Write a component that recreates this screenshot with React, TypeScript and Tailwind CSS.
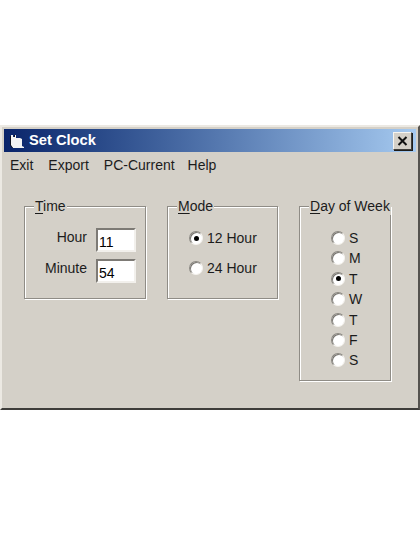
import React from "react";

const font = { fontFamily: '"Liberation Sans", Arial, sans-serif' };

function Radio({ label, checked }: { label: string; checked?: boolean }) {
  return (
    <div className="flex items-center gap-[4px]">
      <div className="flex h-[14px] w-[14px] items-center justify-center rounded-full border border-[#8a8781] border-b-[#f4f2ee] border-r-[#f4f2ee] bg-white shadow-[inset_1px_1px_0_#77746e]">
        {checked && <div className="h-[5px] w-[5px] rounded-full bg-black" />}
      </div>
      <span>{label}</span>
    </div>
  );
}

function Group({ title, rest, className, children }: { title: string; rest: string; className: string; children: React.ReactNode }) {
  return (
    <div className={`relative border border-[#8f8c86] shadow-[inset_1px_1px_0_#fff,1px_1px_0_#fff] ${className}`}>
      <div className="absolute left-[9px] top-[-9px] whitespace-nowrap bg-[#d4d0c8] px-px text-[14px] leading-[17px] text-[#1c1c1c]">
        <span className="underline underline-offset-2">{title}</span>
        {rest}
      </div>
      {children}
    </div>
  );
}

function Field({ label, value, shift }: { label: string; value: string; shift: string }) {
  return (
    <div className="flex items-center justify-end gap-[9px]">
      <span className={shift}>{label}</span>
      <div className="h-[24px] w-[40px] border-2 border-[#7d7a75] border-b-[#f2f0ec] border-r-[#f2f0ec] bg-white pl-[1px] text-[14px] leading-[24px] text-black">
        {value}
      </div>
    </div>
  );
}

export default function App() {
  return (
    <div className="h-[534px] w-[420px] overflow-hidden bg-white pt-[125px]" style={font}>
      <div className="h-[285px] w-[420px] border-2 border-[#ece9e3] border-b-[#3e3d3a] border-r-[#55534f] bg-[#d4d0c8] p-[2px] text-[14px] text-[#1c1c1c]">
        <div className="flex h-[23px] items-center justify-between bg-gradient-to-r from-[#0a246a] to-[#a6caf0] pl-[5px] pr-[4px]">
          <div className="flex items-center gap-[4px]">
            <svg width="16" height="14" viewBox="0 0 16 14" className="mt-[1px]">
              <path d="M2 1h2v2h1V1h2v3h4l2 1v7l2 1v1H4l-2-2z" fill="#f4f4f4" />
              <path d="M1 2v9l2 3h1l-2-3V2z" fill="#10131f" />
              <path d="M5 1h1v2H5z" fill="#10131f" />
            </svg>
            <span className="text-[14.7px] font-bold leading-none text-white">Set Clock</span>
          </div>
          <button className="flex h-[18px] w-[19px] items-center justify-center border border-[#f7f5f0] border-b-[#403f3c] border-r-[#403f3c] bg-[#d4d0c8] shadow-[1px_1px_0_#1d1c1a]">
            <svg width="11" height="10" viewBox="0 0 11 10">
              <path d="M1.5 1 9.5 9M9.5 1 1.5 9" stroke="#111" strokeWidth="2" fill="none" />
            </svg>
          </button>
        </div>
        <div className="flex h-[24px] items-center gap-[15px] pl-[6px] pt-[1px] leading-none">
          <span>Exit</span>
          <span>Export</span>
          <span className="-mr-[1px]">PC-Current</span>
          <span className="-ml-[1px]">Help</span>
        </div>
        <div className="flex items-start gap-[21px] pl-[20px] pt-[30px] leading-none">
          <Group title="T" rest="ime" className="h-[93px] w-[122px]">
            <div className="flex flex-col gap-[7px] pr-[9px] pt-[21px]">
              <Field label="Hour" value="11" shift="-mt-[7px]" />
              <Field label="Minute" value="54" shift="-mt-[7px]" />
            </div>
          </Group>
          <Group title="M" rest="ode" className="h-[93px] w-[111px]">
            <div className="flex flex-col gap-[16px] pl-[21px] pt-[24px]">
              <Radio label="12 Hour" checked />
              <Radio label="24 Hour" />
            </div>
          </Group>
          <Group title="D" rest="ay of Week" className="h-[175px] w-[92px]">
            <div className="flex flex-col gap-[6.4px] pl-[31px] pt-[24px]">
              <Radio label="S" />
              <Radio label="M" />
              <Radio label="T" checked />
              <Radio label="W" />
              <Radio label="T" />
              <Radio label="F" />
              <Radio label="S" />
            </div>
          </Group>
        </div>
      </div>
    </div>
  );
}
